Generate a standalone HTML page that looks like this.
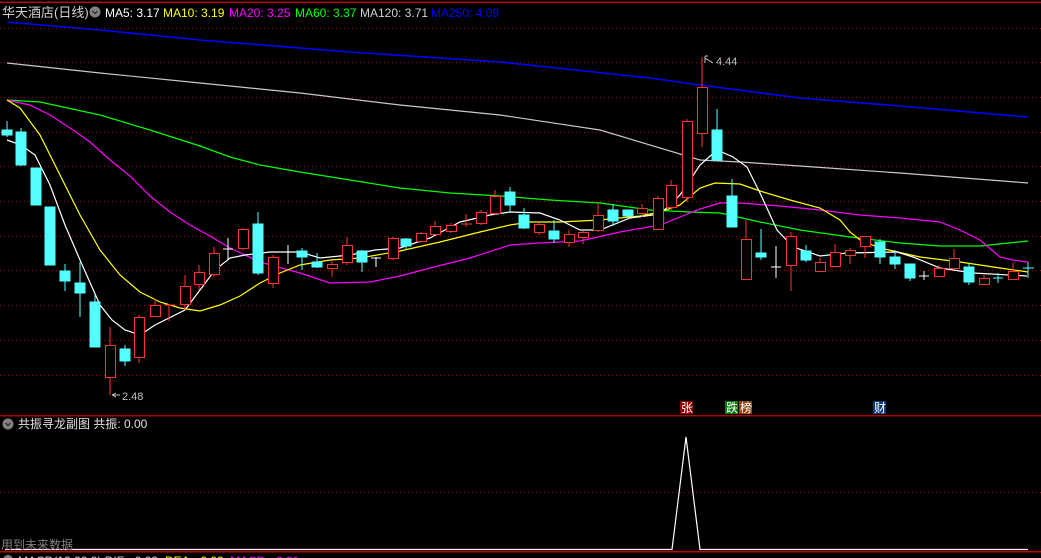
<!DOCTYPE html>
<html><head><meta charset="utf-8"><style>
html,body{margin:0;padding:0;background:#000;width:1041px;height:558px;overflow:hidden}
svg{display:block}
text{font-family:"Liberation Sans","Noto Sans CJK SC",sans-serif}
</style></head><body>
<svg width="1041" height="558" viewBox="0 0 1041 558" xmlns="http://www.w3.org/2000/svg" shape-rendering="crispEdges">
<rect width="1041" height="558" fill="#000"/>
<line x1="0" y1="2" x2="1041" y2="2" stroke="#c00000" stroke-width="1.5"/>
<g stroke="#a00000" stroke-width="1" stroke-dasharray="1,3">
<line x1="0" y1="28.5" x2="1041" y2="28.5"/><line x1="0" y1="62.5" x2="1041" y2="62.5"/><line x1="0" y1="97.5" x2="1041" y2="97.5"/><line x1="0" y1="132.5" x2="1041" y2="132.5"/><line x1="0" y1="166.5" x2="1041" y2="166.5"/><line x1="0" y1="201.5" x2="1041" y2="201.5"/><line x1="0" y1="236.5" x2="1041" y2="236.5"/><line x1="0" y1="270.5" x2="1041" y2="270.5"/><line x1="0" y1="305.5" x2="1041" y2="305.5"/><line x1="0" y1="340.5" x2="1041" y2="340.5"/><line x1="0" y1="375.5" x2="1041" y2="375.5"/><line x1="0" y1="492.5" x2="1041" y2="492.5"/>
</g>
<line x1="0" y1="415.5" x2="1041" y2="415.5" stroke="#b00000" stroke-width="1.5"/>
<line x1="0" y1="551.5" x2="1041" y2="551.5" stroke="#c00000" stroke-width="1.5"/>

<g fill="none" stroke-width="1.2" shape-rendering="auto">
<polyline stroke="#0000ff" stroke-width="1.6" points="7,22 100,30 200,40 350,52 500,62 650,78 700,85 800,98 900,106 1028,117"/>
<polyline stroke="#c8c8c8" points="7,63 100,73 200,83 300,93 400,105 500,115 600,130 700,160 740,162 800,166 900,173 1028,183"/>
<polyline stroke="#00ff00" points="7,100 40,102 100,115 150,130 200,146 230,157 260,165 300,172 350,180 400,188 450,193 500,196 550,200 600,203 650,210 690,212 720,213 760,222 800,230 850,237 900,243 940,246 980,246 1028,241"/>
<polyline stroke="#ff00ff" points="7,100 30,105 50,115 70,128 90,142 110,160 130,176 150,196 170,212 190,225 210,236 230,248 260,262 300,273 330,283 370,282 400,276 430,268 470,258 510,245 540,243 580,241 620,232 660,225 680,217 700,209 720,203 740,203 780,206 820,210 860,215 900,218 940,222 960,230 980,240 1000,257 1013,260 1028,262"/>
<polyline stroke="#ffff00" points="7,100 20,108 40,135 60,175 80,215 100,250 120,275 140,292 160,302 180,308 200,311 220,305 240,296 260,283 280,273 300,265 330,260 360,258 400,251 440,242 480,232 510,225 530,222 560,222 600,220 640,216 660,212 680,205 700,188 715,183 740,184 760,191 790,200 820,208 840,220 850,232 860,240 880,248 920,257 960,262 1000,268 1028,272"/>
<polyline stroke="#ffffff" points="7,140 21,145 35,155 50,185 65,225 80,260 100,305 112,320 125,330 140,335 155,325 185,310 200,290 215,270 230,258 245,255 270,252 300,252 320,258 350,255 375,250 400,248 430,238 460,222 490,215 510,212 540,213 560,220 580,230 600,230 630,218 660,214 680,195 700,165 717,150 733,157 747,167 760,193 777,230 793,247 820,256 847,253 897,252 913,257 940,268 973,273 1027,276"/>
</g>

<g stroke-width="1.2">
<g stroke="#54ffff" fill="#54ffff">
<line x1="7" y1="121" x2="7" y2="137"/><rect x="2" y="130" width="10" height="5"/>
<line x1="21" y1="128" x2="21" y2="166"/><rect x="16" y="132" width="10" height="33"/>
<rect x="31" y="168" width="10" height="37"/>
<rect x="45" y="207" width="10" height="58"/>
<line x1="65" y1="264" x2="65" y2="291"/><rect x="60" y="271" width="10" height="10"/>
<line x1="80" y1="262" x2="80" y2="317"/><rect x="75" y="283" width="10" height="10"/>
<line x1="95" y1="295" x2="95" y2="347"/><rect x="90" y="302" width="10" height="45"/>
<line x1="125" y1="345" x2="125" y2="366"/><rect x="120" y="349" width="10" height="12"/>
<line x1="258" y1="212" x2="258" y2="275"/><rect x="253" y="224" width="10" height="49"/>
<line x1="302" y1="248" x2="302" y2="270"/><rect x="297" y="251" width="10" height="6"/>
<line x1="317" y1="253" x2="317" y2="268"/><rect x="312" y="262" width="10" height="5"/>
<line x1="362" y1="250" x2="362" y2="272"/><rect x="357" y="251" width="10" height="11"/>
<line x1="406" y1="238" x2="406" y2="250"/><rect x="401" y="239" width="10" height="7"/>
<line x1="510" y1="187" x2="510" y2="212"/><rect x="505" y="192" width="10" height="13"/>
<line x1="524" y1="208" x2="524" y2="229"/><rect x="519" y="215" width="10" height="13"/>
<line x1="554" y1="220" x2="554" y2="243"/><rect x="549" y="231" width="10" height="8"/>
<line x1="613" y1="204" x2="613" y2="226"/><rect x="608" y="210" width="10" height="11"/>
<rect x="623" y="210" width="10" height="6"/>
<line x1="717" y1="109" x2="717" y2="160"/><rect x="712" y="130" width="10" height="30"/>
<line x1="732" y1="179" x2="732" y2="227"/><rect x="727" y="196" width="10" height="31"/>
<line x1="761" y1="229" x2="761" y2="260"/><rect x="756" y="253" width="10" height="4"/>
<line x1="806" y1="245" x2="806" y2="262"/><rect x="801" y="251" width="10" height="9"/>
<line x1="880" y1="239" x2="880" y2="264"/><rect x="875" y="242" width="10" height="15"/>
<line x1="895" y1="250" x2="895" y2="269"/><rect x="890" y="257" width="10" height="7"/>
<line x1="910" y1="264" x2="910" y2="281"/><rect x="905" y="264" width="10" height="14"/>
<line x1="969" y1="264" x2="969" y2="285"/><rect x="964" y="267" width="10" height="15"/>
<line x1="998" y1="273" x2="998" y2="283"/><line x1="993" y1="278" x2="1003" y2="278"/>
<line x1="1028" y1="262" x2="1028" y2="278"/><line x1="1023" y1="268" x2="1034" y2="268"/>
</g>
<g stroke="#ffffff">
<line x1="228" y1="238" x2="228" y2="260"/><line x1="223" y1="249" x2="233" y2="249"/>
<line x1="288" y1="245" x2="288" y2="264"/><line x1="283" y1="252" x2="293" y2="252"/>
<line x1="376" y1="257" x2="376" y2="267"/><line x1="371" y1="258" x2="381" y2="258"/>
<line x1="776" y1="246" x2="776" y2="278"/><line x1="771" y1="267" x2="781" y2="267"/>
<line x1="924" y1="271" x2="924" y2="280"/><line x1="919" y1="276" x2="929" y2="276"/>
</g>
<g stroke="#ff3232" fill="#000">
<line x1="110" y1="327" x2="110" y2="395"/><rect x="105.5" y="345.5" width="10" height="32"/>
<line x1="139" y1="315" x2="139" y2="363"/><rect x="134.5" y="317.5" width="10" height="40"/>
<line x1="155" y1="299" x2="155" y2="306"/><rect x="150.5" y="305.5" width="10" height="11"/>
<line x1="169" y1="304" x2="169" y2="321"/><line x1="164" y1="305" x2="175" y2="305"/>
<line x1="185" y1="275" x2="185" y2="310"/><rect x="180.5" y="286.5" width="10" height="18"/>
<line x1="199" y1="265" x2="199" y2="290"/><rect x="194.5" y="272.5" width="10" height="12"/>
<line x1="214" y1="247" x2="214" y2="277"/><rect x="209.5" y="253.5" width="10" height="21"/>
<line x1="243" y1="228" x2="243" y2="250"/><rect x="238.5" y="229.5" width="10" height="19"/>
<line x1="273" y1="255" x2="273" y2="288"/><rect x="268.5" y="257.5" width="10" height="26"/>
<line x1="332" y1="261" x2="332" y2="277"/><rect x="327.5" y="264.5" width="10" height="4"/>
<line x1="347" y1="237" x2="347" y2="265"/><rect x="342.5" y="245.5" width="10" height="17"/>
<line x1="393" y1="237" x2="393" y2="260"/><rect x="388.5" y="238.5" width="10" height="20"/>
<line x1="421" y1="232" x2="421" y2="243"/><rect x="416.5" y="233.5" width="10" height="8"/>
<line x1="435" y1="221" x2="435" y2="234"/><rect x="430.5" y="226.5" width="10" height="8"/>
<line x1="451" y1="223" x2="451" y2="233"/><rect x="446.5" y="225.5" width="10" height="6"/>
<line x1="466" y1="214" x2="466" y2="227"/><line x1="461" y1="224" x2="472" y2="224"/>
<line x1="481" y1="210" x2="481" y2="225"/><rect x="476.5" y="212.5" width="10" height="11"/>
<line x1="495" y1="190" x2="495" y2="215"/><rect x="490.5" y="196.5" width="10" height="17"/>
<line x1="539" y1="222" x2="539" y2="235"/><rect x="534.5" y="224.5" width="10" height="8"/>
<line x1="569" y1="230" x2="569" y2="247"/><rect x="564.5" y="234.5" width="10" height="8"/>
<line x1="583" y1="231" x2="583" y2="244"/><rect x="578.5" y="232.5" width="10" height="5"/>
<line x1="598" y1="203" x2="598" y2="232"/><rect x="593.5" y="215.5" width="10" height="15"/>
<line x1="642" y1="204" x2="642" y2="217"/><rect x="637.5" y="208.5" width="10" height="5"/>
<line x1="658" y1="196" x2="658" y2="230"/><rect x="653.5" y="198.5" width="10" height="31"/>
<line x1="671" y1="180" x2="671" y2="210"/><rect x="666.5" y="185.5" width="10" height="22"/>
<line x1="687" y1="119" x2="687" y2="202"/><rect x="682.5" y="121.5" width="10" height="76"/>
<line x1="702" y1="57" x2="702" y2="147"/><rect x="697.5" y="87.5" width="10" height="46"/>
<line x1="746" y1="220" x2="746" y2="279"/><rect x="741.5" y="239.5" width="10" height="40"/>
<line x1="791" y1="232" x2="791" y2="291"/><rect x="786.5" y="236.5" width="10" height="29"/>
<line x1="820" y1="258" x2="820" y2="271"/><rect x="815.5" y="262.5" width="10" height="9"/>
<line x1="835" y1="244" x2="835" y2="266"/><rect x="830.5" y="252.5" width="10" height="14"/>
<line x1="850" y1="248" x2="850" y2="264"/><rect x="845.5" y="250.5" width="10" height="5"/>
<line x1="865" y1="236" x2="865" y2="258"/><rect x="860.5" y="236.5" width="10" height="10"/>
<line x1="939" y1="265" x2="939" y2="277"/><rect x="934.5" y="268.5" width="10" height="8"/>
<line x1="954" y1="249" x2="954" y2="268"/><rect x="949.5" y="258.5" width="10" height="10"/>
<line x1="984" y1="275" x2="984" y2="285"/><rect x="979.5" y="278.5" width="10" height="6"/>
<line x1="1013" y1="263" x2="1013" y2="279"/><rect x="1008.5" y="271.5" width="10" height="8"/>
</g>
</g>

<g fill="#c0c0c0" font-size="11" stroke="none">
<path d="M112,395 l4,-2 M112,395 l4,2 M112,395 h8" stroke="#c0c0c0" fill="none"/>
<text x="122" y="400">2.48</text>
<path d="M705,56 v7 M705,56 l3,0 M705,58 l8,5" stroke="#c0c0c0" fill="none"/>
<text x="716" y="65">4.44</text>
</g>

<rect x="680" y="401" width="13" height="13" fill="#8b0000"/>
<text x="681" y="412" font-size="12" fill="#fff">张</text>
<rect x="725" y="401" width="13" height="13" fill="#0a7a0a"/>
<text x="726" y="412" font-size="12" fill="#fff">跌</text>
<rect x="739" y="401" width="13" height="13" fill="#8b4513"/>
<text x="740" y="412" font-size="12" fill="#fff">榜</text>
<rect x="873" y="401" width="13" height="13" fill="#0a3a7a"/>
<text x="874" y="412" font-size="12" fill="#fff">财</text>

<text x="2" y="17" font-size="13" fill="#d0d0d0">华天酒店(日线)</text>
<circle cx="95" cy="12" r="5.5" fill="#808080"/>
<path d="M92.5,11 l2.5,2.5 l2.5,-2.5" stroke="#222" fill="none" stroke-width="1.2" shape-rendering="auto"/>
<text y="17" font-size="12"><tspan x="105" fill="#ffffff">MA5: 3.17</tspan><tspan x="163" fill="#ffff00">MA10: 3.19</tspan><tspan x="229" fill="#ff00ff">MA20: 3.25</tspan><tspan x="295" fill="#00ff00">MA60: 3.37</tspan><tspan x="360" fill="#d0d0d0">MA120: 3.71</tspan><tspan x="431" fill="#0000ff">MA250: 4.09</tspan></text>

<circle cx="8" cy="424" r="5.5" fill="#808080"/>
<path d="M5.5,423 l2.5,2.5 l2.5,-2.5" stroke="#222" fill="none" stroke-width="1.2" shape-rendering="auto"/>
<text x="18" y="428" font-size="12" fill="#e0e0e0">共振寻龙副图 共振: 0.00</text>
<polyline points="5,549.5 672,549.5 686,437 700,549.5 1028,549.5" fill="none" stroke="#fff" stroke-width="1.2" shape-rendering="auto"/>
<text x="1" y="549" font-size="12" fill="#808080">用到未来数据</text>
<text y="565" font-size="12"><tspan x="18" fill="#d0d0d0">MACD(12,26,9) DIF: -0.03</tspan><tspan x="165" fill="#ffff00">DEA: -0.02</tspan><tspan x="230" fill="#ff00ff">MACD: -0.01</tspan></text>
<circle cx="8" cy="560" r="5" fill="#808080"/>
</svg>
</body></html>
